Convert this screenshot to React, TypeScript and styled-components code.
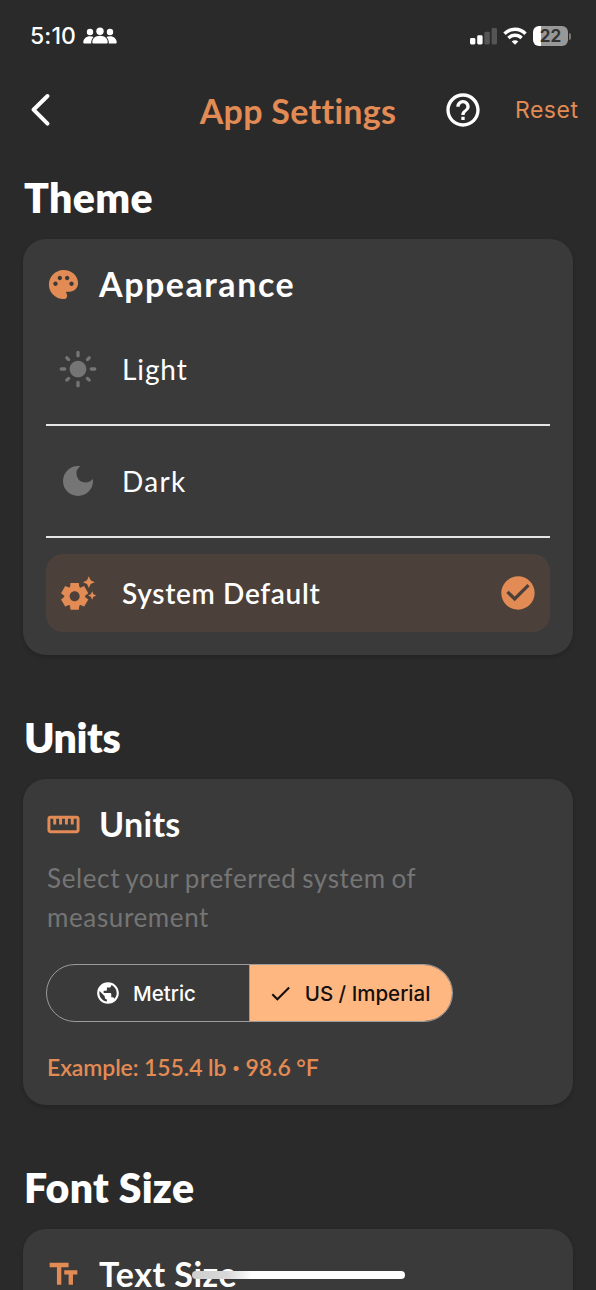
import React from "react";
import styled, { createGlobalStyle } from "styled-components";
import {
  MdCheck,
  MdCheckCircle,
  MdDarkMode,
  MdHelpOutline,
  MdLightMode,
  MdPalette,
  MdPublic,
  MdSettingsSuggest,
  MdStraighten,
  MdTextFields,
} from "react-icons/md";

const color = {
  page: "#2a2a2a",
  card: "#3a3a3a",
  accent: "#e38b54",
  selected: "#4b413a",
  chip: "#ffb782",
  muted: "#757575",
  outline: "#9b9b9b",
  text: "#ffffff",
};

const brandFont = `Lato, "Liberation Sans", sans-serif`;
const systemFont = `Inter, "Liberation Sans", sans-serif`;

const GlobalStyle = createGlobalStyle`
  *, *::before, *::after { box-sizing: border-box; }
  body { margin: 0; background: ${color.page}; }
  button { border: 0; padding: 0; background: none; color: inherit; font: inherit; }
  svg { display: block; flex: none; }
`;

const Screen = styled.div`
  position: relative;
  width: 596px;
  height: 1290px;
  overflow: hidden;
  background: ${color.page};
  color: ${color.text};
  font-family: ${brandFont};
`;

const StatusBar = styled.header`
  display: flex;
  align-items: center;
  height: 72px;
  padding: 0 25px 0 30px;
  font-family: ${systemFont};
`;

const Clock = styled.span`
  width: 47px;
  margin-right: 6px;
  font-size: 23px;
  font-weight: 550;
  letter-spacing: 0.1px;
  white-space: nowrap;
`;

const StatusIcons = styled.div`
  display: flex;
  align-items: center;
  gap: 6px;
  margin-left: auto;
`;

const Battery = styled.div`
  display: flex;
  align-items: center;
  gap: 1px;
`;

const BatteryBody = styled.div`
  display: flex;
  align-items: center;
  justify-content: center;
  width: 35px;
  height: 20px;
  border-radius: 6px;
  background: linear-gradient(90deg, #fff 0 8px, #989898 8px);
  color: #333;
  font-size: 17px;
  font-weight: 700;
  line-height: 20px;
`;

const BatteryTip = styled.div`
  width: 2px;
  height: 7px;
  border-radius: 0 3px 3px 0;
  background: #777;
`;

const NavBar = styled.nav`
  display: grid;
  grid-template-columns: 170px 256px 74px 1fr;
  align-items: center;
  height: 76px;
`;

const BackButton = styled.button`
  padding-left: 29px;
`;

const NavTitle = styled.h1`
  margin: 0;
  color: ${color.accent};
  font-size: 34px;
  font-weight: 700;
  letter-spacing: 0.3px;
  text-align: center;
  white-space: nowrap;
`;

const HelpButton = styled.button`
  display: flex;
  justify-content: center;
  margin-top: -1px;
`;

const ResetButton = styled.button`
  padding-left: 15px;
  color: ${color.accent};
  font-family: ${systemFont};
  font-size: 23px;
  letter-spacing: 0.5px;
  text-align: left;
`;

const Content = styled.main`
  display: flex;
  flex-direction: column;
  gap: 53px;
  padding: 20px 23px 0;
`;

const SectionTitle = styled.h2<{ $spacing: number }>`
  height: 60px;
  margin: 0 0 11px 1px;
  font-size: 41px;
  font-weight: 800;
  line-height: 60px;
  letter-spacing: ${(p) => p.$spacing}px;
`;

const Card = styled.div<{ $height: number }>`
  height: ${(p) => p.$height}px;
  padding: 22px 23px;
  border-radius: 23px;
  background: ${color.card};
  box-shadow: 0 2px 4px rgba(0, 0, 0, 0.18);
`;

const CardHeader = styled.div<{ $spacing: number }>`
  display: flex;
  align-items: center;
  gap: 18px;
  height: 46px;
  color: ${color.accent};

  h3 {
    margin: 0;
    color: ${color.text};
    font-size: 34px;
    font-weight: 700;
    line-height: 46px;
    letter-spacing: ${(p) => p.$spacing}px;
  }
`;

const Options = styled.div`
  display: flex;
  flex-direction: column;
  margin-top: 23px;
`;

const Option = styled.button<{ $selected?: boolean; $spacing: number }>`
  display: flex;
  align-items: center;
  gap: 24px;
  height: 78px;
  padding: 0 12px;
  border-radius: 17px;
  background: ${(p) => (p.$selected ? color.selected : "transparent")};
  font-size: 28px;
  font-weight: ${(p) => (p.$selected ? 600 : 400)};
  letter-spacing: ${(p) => p.$spacing}px;

  svg { color: ${(p) => (p.$selected ? color.accent : color.muted)}; }
  svg:last-child:not(:first-child) { margin-left: auto; }
`;

const Divider = styled.hr`
  width: 100%;
  height: 2px;
  margin: 16px 0;
  border: 0;
  background: #e4e6e4;
`;

const Description = styled.p`
  margin: 12px 0 0 1px;
  color: ${color.muted};
  font-size: 26px;
  line-height: 39px;
  letter-spacing: 0.62px;
  word-spacing: -1.5px;
`;

const Segments = styled.div`
  display: flex;
  width: 407px;
  height: 58px;
  margin-top: 27px;
  overflow: hidden;
  border: 1.5px solid ${color.outline};
  border-radius: 29px;
`;

const Segment = styled.button<{ $active?: boolean }>`
  display: flex;
  align-items: center;
  justify-content: center;
  gap: ${(p) => (p.$active ? 12 : 12)}px;
  width: ${(p) => (p.$active ? 204 : 202)}px;
  padding-right: 5px;
  flex: none;
  border-left: ${(p) => (p.$active ? `1.5px solid ${color.outline}` : "0")};
  background: ${(p) => (p.$active ? color.chip : "transparent")};
  color: ${(p) => (p.$active ? "#15100c" : color.text)};
  font-family: ${systemFont};
  font-size: 20.5px;
  font-weight: 450;
  letter-spacing: 0;
  white-space: nowrap;
`;

const Example = styled.p`
  margin: 29px 0 0 1px;
  color: ${color.accent};
  font-size: 23px;
  font-weight: 600;
  line-height: 32px;
  letter-spacing: -0.1px;
`;

const Bullet = styled.span`
  font-family: ${systemFont};
  font-size: 16px;
  vertical-align: 3px;
  line-height: 1;
`;

const HomeIndicator = styled.div`
  position: absolute;
  left: 192px;
  bottom: 11px;
  width: 213px;
  height: 8px;
  border-radius: 4px;
  background: linear-gradient(90deg, #cfcfcf 0, #d8d8d8 35px, #fff 60px);
`;

const PeopleIcon = () => (
  <svg width="34" height="18" viewBox="0 0 34 18" fill="#fff">
    <circle cx="7" cy="5" r="3.2" />
    <circle cx="27" cy="5" r="3.2" />
    <path d="M.3 15.2C.3 12 3.2 9.3 7 9.3c1.4 0 2.6.3 3.6.8-1.5 1.4-2.4 3.2-2.4 5.6 0 .4 0 .6.2.8H1.6c-.9 0-1.3-.4-1.3-1.3z" />
    <path d="M33.7 15.2c0-3.2-2.9-5.9-6.7-5.9-1.4 0-2.6.3-3.6.8 1.5 1.4 2.4 3.2 2.4 5.6 0 .4 0 .6-.2.8h6.8c.9 0 1.3-.4 1.3-1.3z" />
    <circle cx="17" cy="4.3" r="3.7" />
    <path
      d="M9.3 15c0-3.4 3.2-6.2 7.7-6.2s7.7 2.8 7.7 6.2c0 1-.5 1.5-1.5 1.5H10.8c-1 0-1.5-.5-1.5-1.5z"
      stroke={color.page}
      strokeWidth="1.2"
      paintOrder="stroke"
    />
  </svg>
);

const SignalIcon = () => (
  <svg width="27" height="18" viewBox="0 0 27 18">
    <rect x="0" y="11" width="5.4" height="6.5" rx="1.4" fill="#fff" />
    <rect x="7.2" y="8.3" width="5.4" height="9.2" rx="1.4" fill="#fff" />
    <rect x="14.4" y="4.8" width="5.4" height="12.7" rx="1.4" fill="#555" />
    <rect x="21.6" y="1" width="5.4" height="16.5" rx="1.4" fill="#555" />
  </svg>
);

const WifiIcon = () => (
  <svg width="24" height="18" viewBox="0 0 24 18" fill="none" stroke="#fff" strokeWidth="3.4">
    <path d="M1.5 6.7C7.3.8 16.7.8 22.5 6.7" />
    <path d="M5.4 11c3.7-3.6 9.5-3.6 13.2 0" />
    <path d="M12 17.8l-3.3-3.4c1.9-1.7 4.7-1.7 6.6 0z" fill="#fff" stroke="none" />
  </svg>
);

const BackIcon = () => (
  <svg width="24" height="36" viewBox="0 0 24 36" fill="none" stroke="#fff" strokeWidth="4" strokeLinecap="round" strokeLinejoin="round">
    <path d="M18.5 4 4.5 17.7l14 14" />
  </svg>
);

export default function App() {
  return (
    <Screen>
      <GlobalStyle />
      <StatusBar>
        <Clock>5:10</Clock>
        <PeopleIcon />
        <StatusIcons>
          <SignalIcon />
          <WifiIcon />
          <Battery>
            <BatteryBody>22</BatteryBody>
            <BatteryTip />
          </Battery>
        </StatusIcons>
      </StatusBar>

      <NavBar>
        <BackButton aria-label="Back"><BackIcon /></BackButton>
        <NavTitle>App Settings</NavTitle>
        <HelpButton aria-label="Help"><MdHelpOutline size={40} /></HelpButton>
        <ResetButton>Reset</ResetButton>
      </NavBar>

      <Content>
        <section>
          <SectionTitle $spacing={0.4}>Theme</SectionTitle>
          <Card $height={416}>
            <CardHeader $spacing={1.55}>
              <MdPalette size={35} />
              <h3>Appearance</h3>
            </CardHeader>
            <Options>
              <Option $spacing={0.9}>
                <MdLightMode size={40} />
                <span>Light</span>
              </Option>
              <Divider />
              <Option $spacing={1.3}>
                <MdDarkMode size={40} />
                <span>Dark</span>
              </Option>
              <Divider />
              <Option $selected $spacing={0.68}>
                <MdSettingsSuggest size={40} />
                <span>System Default</span>
                <MdCheckCircle size={40} />
              </Option>
            </Options>
          </Card>
        </section>

        <section>
          <SectionTitle $spacing={-0.4}>Units</SectionTitle>
          <Card $height={326}>
            <CardHeader $spacing={0.3}>
              <MdStraighten size={35} />
              <h3>Units</h3>
            </CardHeader>
            <Description>
              Select your preferred system of
              <br />
              measurement
            </Description>
            <Segments>
              <Segment>
                <MdPublic size={26} />
                Metric
              </Segment>
              <Segment $active>
                <MdCheck size={25} />
                US / Imperial
              </Segment>
            </Segments>
            <Example>
              Example: 155.4 lb <Bullet>•</Bullet> 98.6 °F
            </Example>
          </Card>
        </section>

        <section>
          <SectionTitle $spacing={0.25}>Font Size</SectionTitle>
          <Card $height={200}>
            <CardHeader $spacing={0.5}>
              <MdTextFields size={35} />
              <h3>Text Size</h3>
            </CardHeader>
          </Card>
        </section>
      </Content>
      <HomeIndicator />
    </Screen>
  );
}
